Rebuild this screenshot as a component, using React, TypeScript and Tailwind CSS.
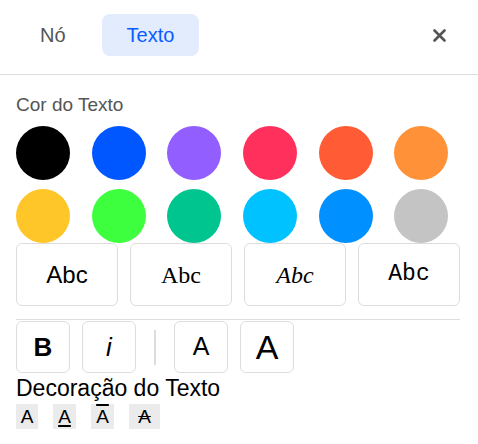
import React, { useState } from 'react';

const colors = [
  '#000000', '#0057ff', '#925eff', '#ff305c', '#ff5c36', '#ff9138',
  '#ffc629', '#3eff3e', '#00c58f', '#00c2ff', '#0090ff', '#c4c4c4',
];

const App: React.FC = () => {
  const [tab, setTab] = useState('texto');

  return (
    <div className="w-[478px] h-[444px] bg-white overflow-hidden font-['Liberation_Sans',Arial,sans-serif] text-black">
      {/* Header with tabs */}
      <div className="flex items-center justify-between pl-4 pr-[32px] pt-[14px] pb-[18px] border-b border-[#dddddd]">
        <div className="flex gap-3">
          <button
            onClick={() => setTab('no')}
            className={`h-[42px] px-6 rounded-lg text-[20px] ${tab === 'no' ? 'bg-[#e3ecfd] text-[#0a5cff]' : 'text-[#555555]'}`}
          >
            Nó
          </button>
          <button
            onClick={() => setTab('texto')}
            className={`h-[42px] px-[25px] rounded-lg text-[20px] ${tab === 'texto' ? 'bg-[#e3ecfd] text-[#0a5cff]' : 'text-[#555555]'}`}
          >
            Texto
          </button>
        </div>
        <button className="text-[#555555]">
          <svg width="13" height="13" viewBox="0 0 13 13" fill="none" stroke="currentColor" strokeWidth="2.6" strokeLinecap="round">
            <path d="M1.5 1.5 L11.5 11.5 M11.5 1.5 L1.5 11.5" />
          </svg>
        </button>
      </div>

      <div className="pl-4 pr-[18px]">
        <div className="mt-[19px] text-[19px] leading-[21px] text-[#555555]">Cor do Texto</div>

        {/* Color swatches */}
        <div className="mt-[11px] grid grid-cols-6 gap-x-[10px] gap-y-[9px]">
          {colors.map((c) => (
            <button key={c} className="w-[54px] h-[54px] rounded-full" style={{ backgroundColor: c }} />
          ))}
        </div>

        {/* Font families */}
        <div className="grid grid-cols-4 gap-3">
          <button className="h-[63px] rounded-md border border-[#dddddd] bg-white">
            <span className="text-[24px] font-['Liberation_Sans',sans-serif]">Abc</span>
          </button>
          <button className="h-[63px] rounded-md border border-[#dddddd] bg-white">
            <span className="text-[24px] font-['Liberation_Serif',serif]">Abc</span>
          </button>
          <button className="h-[63px] rounded-md border border-[#dddddd] bg-white">
            <span className="text-[24px] font-['Liberation_Serif',serif] italic">Abc</span>
          </button>
          <button className="h-[63px] rounded-md border border-[#dddddd] bg-white">
            <span className="text-[23px] font-['Liberation_Mono',monospace]">Abc</span>
          </button>
        </div>

        <div className="mt-[13px] border-t border-[#dddddd]" />

        {/* Style buttons */}
        <div className="mt-[1px] flex items-center gap-3">
          <button className="w-[54px] h-[52px] rounded-md border border-[#dddddd] text-[26px] font-bold">B</button>
          <button className="w-[54px] h-[52px] rounded-md border border-[#dddddd] text-[26px] italic">i</button>
          <div className="mx-[6px] w-[2px] h-[35px] bg-[#dddddd]" />
          <button className="w-[54px] h-[52px] rounded-md border border-[#dddddd] text-[25px]">A</button>
          <button className="w-[54px] h-[52px] rounded-md border border-[#dddddd] text-[34px]">A</button>
        </div>

        <div className="mt-[3px] text-[23px] leading-[25px]">Decoração do Texto</div>

        {/* Text decoration */}
        <div className="mt-[3px] flex gap-[15px]">
          <button className="w-[22px] h-[25px] bg-[#ebebeb] text-[19px] leading-none">A</button>
          <button className="w-[23px] h-[25px] bg-[#ebebeb] text-[19px] leading-none underline decoration-2 underline-offset-2">A</button>
          <button className="w-[23px] h-[25px] bg-[#ebebeb] text-[19px] leading-none overline decoration-2">A</button>
          <button className="w-[31px] h-[25px] bg-[#ebebeb] text-[19px] leading-none line-through">A</button>
        </div>
      </div>
    </div>
  );
};

export default App;
